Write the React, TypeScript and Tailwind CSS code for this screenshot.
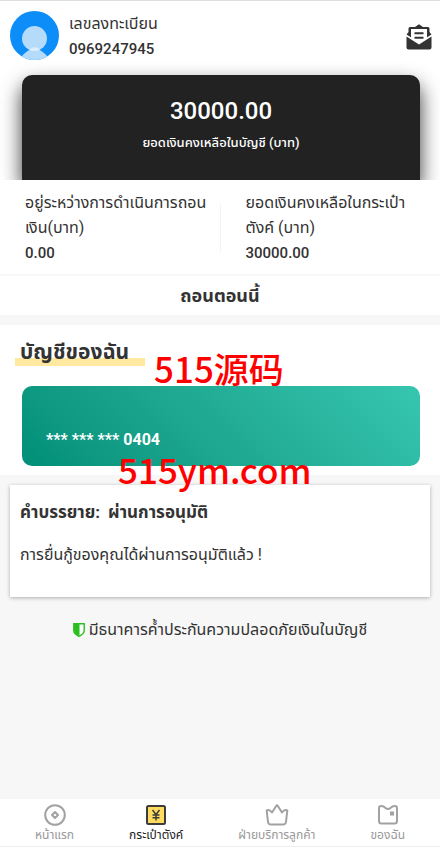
import type { ReactNode } from "react";

interface BalanceProps {
  label: string;
  value: string;
}

interface TabProps {
  label: string;
  icon: ReactNode;
  active?: boolean;
}

const AvatarIcon = () => (
  <svg viewBox="0 0 49 49" className="size-[49px] shrink-0" aria-hidden="true">
    <defs>
      <clipPath id="avatar-clip">
        <circle cx="24.5" cy="24.5" r="24.5" />
      </clipPath>
    </defs>
    <g clipPath="url(#avatar-clip)">
      <rect width="49" height="49" fill="#0d8df8" />
      <path d="M10 47 Q18 38 24.500 37 Q31 38 39 47 V49 H10 Z" fill="#b5dbfb" />
      <circle cx="24.5" cy="27.5" r="12.5" fill="#b5dbfb" />
      <path d="M19 38.500Q24.500 34 30 38.500Q24.500 41.500 19 38.500Z" fill="#dceefe" />
    </g>
  </svg>
);

const MailIcon = () => (
  <svg viewBox="0 0 26 26" className="size-[26px]" aria-hidden="true">
    <path d="M.5 10.500 L2.500 8 V4.500 Q2.500 3 4 3 H9 L13 .3 L17 3 H22 Q23.500 3 23.500 4.500 V8 L25.500 10.500 L20 14 H6 Z" fill="#333" />
    <path d="M5 5 H21 V14.500 L13 19 L5 14.500 Z" fill="#fff" />
    <path d="M8.500 9.300 H17.500 M8.500 13.700 H17.500" stroke="#333" strokeWidth="2" />
    <path d="M.5 12.500 L13 20.500 L25.500 12.500 V23.500 Q25.500 25.500 23.500 25.500 H2.500 Q.5 25.500 .5 23.500 Z" fill="#333" />
  </svg>
);

const ShieldIcon = () => (
  <svg viewBox="0 0 12 14" className="h-[14px] w-[12px] shrink-0" aria-hidden="true">
    <path d="M.8 .8 H11.200 V7.500 Q11.200 11 6 13.300 Q.8 11 .8 7.500 Z" fill="#fff" stroke="#2abf1e" strokeWidth="1.400" />
    <path d="M1 1 H6.500 V13 Q1 11 1 7.500 Z" fill="#2abf1e" />
  </svg>
);

const HomeIcon = () => (
  <svg viewBox="0 0 24 24" className="size-6" fill="none" stroke="#a2a2a2" strokeWidth="2" aria-hidden="true">
    <circle cx="12" cy="12" r="9.800" />
    <path d="M12 9 L15 12 L12 15 L9 12 Z" strokeLinejoin="round" />
  </svg>
);

const WalletIcon = () => (
  <svg viewBox="0 0 24 24" className="size-6" fill="none" aria-hidden="true">
    <rect x="3" y="3" width="18" height="18" rx="1.500" fill="#ffdc60" stroke="#3c3c3c" strokeWidth="2" />
    <path d="M8.500 7 L12 11.500 L15.500 7 M12 11.500 V17.500 M8.500 12 H15.500 M8.500 14.700 H15.500" stroke="#3c3c3c" strokeWidth="1.500" />
  </svg>
);

const ServiceIcon = () => (
  <svg viewBox="0 0 24 24" className="size-6" fill="none" stroke="#a2a2a2" strokeWidth="2" strokeLinecap="round" strokeLinejoin="round" aria-hidden="true">
    <path d="M1.700 7.500 Q4.500 6 7 9.500 L11.200 3 Q12 1.700 12.800 3 L17 9.500 Q19.500 6 22.300 7.500 L21 19 Q20.700 21.500 18 21.500 H6 Q3.300 21.500 3 19 Z" />
  </svg>
);

const MineIcon = () => (
  <svg viewBox="0 0 24 24" className="size-6" fill="none" stroke="#a2a2a2" strokeWidth="2" strokeLinejoin="round" aria-hidden="true">
    <path d="M3 5 Q3 3 5 3 Q8 3 9.500 5 Q12 7 14.500 5 Q16 3 19 3 Q21 3 21 5 V18 Q21 20.500 18.500 20.500 H5.500 Q3 20.500 3 18 Z" />
    <rect x="14" y="8.500" width="4" height="4" fill="#a2a2a2" stroke="none" />
  </svg>
);

const Balance = ({ label, value }: BalanceProps) => (
  <div className="flex-1 pr-[10px] pl-[25px]">
    <p>{label}</p>
    <p className="pt-px text-[15px] leading-[25px] font-medium">{value}</p>
  </div>
);

const Tab = ({ label, icon, active }: TabProps) => (
  <button type="button" className="flex flex-col items-center">
    {icon}
    <span className={`text-xs leading-4 whitespace-nowrap ${active ? "text-[#222]" : "text-[#999]"}`}>{label}</span>
  </button>
);

export default function App() {
  return (
    <div className="relative flex min-h-screen flex-col border-t border-[#dedede] bg-[#f7f7f7] font-[Roboto,'Noto_Sans_Thai','Noto_Sans',sans-serif] text-base leading-[25px] text-[#333]">
      <div className="overflow-hidden bg-white">
        <header className="flex items-start gap-[10px] px-[10px] pt-[10px]">
          <AvatarIcon />
          <div className="flex-1">
            <p>เลขลงทะเบียน</p>
            <p className="pt-px text-[15px] leading-[25px] font-medium">0969247945</p>
          </div>
          <button type="button" aria-label="ข้อความ" className="-mr-0.5 self-center">
            <MailIcon />
          </button>
        </header>
        <div className="mt-[13px] mr-5 ml-[22px] flex h-[105px] flex-col items-center rounded-t-[10px] bg-[#222] pt-5 text-white shadow-[0_10px_20px_rgba(0,0,0,0.8)]">
          <p className="text-2xl leading-8 font-medium">30000.00</p>
          <p className="mt-1 text-[13px] leading-6 font-medium">ยอดเงินคงเหลือในบัญชี (บาท)</p>
        </div>
      </div>

      <section className="flex items-center bg-white pt-[10px] pb-2">
        <Balance label="อยู่ระหว่างการดำเนินการถอนเงิน(บาท)" value="0.00" />
        <div className="h-12 w-px bg-[#f3f3f3]" />
        <Balance label="ยอดเงินคงเหลือในกระเป๋าตังค์ (บาท)" value="30000.00" />
      </section>
      <button type="button" className="h-[41px] border-t-2 border-[#f7f7f7] bg-white text-lg font-bold">
        ถอนตอนนี้
      </button>

      <section className="mt-[10px] bg-white px-[15px] pt-[13px] pb-[9px]">
        <h2 className="w-fit bg-linear-to-t from-[#ffe9a0] to-[#ffe9a0] bg-[length:100%_8px] bg-bottom bg-no-repeat pr-4 pl-[5px] text-[21px] leading-7 font-bold">
          บัญชีของฉัน
        </h2>
        <div className="mt-5 mr-[5px] ml-[7px] h-20 rounded-[10px] bg-linear-45 from-[#008f78] to-[#36c6b0] px-6 pt-[41px] font-bold text-white">
          *** *** *** 0404
        </div>
      </section>

      <section className="m-[10px] h-[112px] bg-white p-[10px] shadow-[0_1px_4px_rgba(0,0,0,0.3)]">
        <h3 className="mt-[5px] flex gap-2 text-[17px] leading-[25px] font-bold">
          <span>คำบรรยาย:</span>
          <span>ผ่านการอนุมัติ</span>
        </h3>
        <p className="mt-[17px]">การยื่นกู้ของคุณได้ผ่านการอนุมัติแล้ว !</p>
      </section>

      <p className="mt-[10px] flex items-center justify-center gap-1">
        <ShieldIcon />
        มีธนาคารค้ำประกันความปลอดภัยเงินในบัญชี
      </p>

      <nav className="mt-auto flex h-12 items-start justify-between border-b border-[#eee] bg-white px-[35px] pt-1">
        <Tab label="หน้าแรก" icon={<HomeIcon />} />
        <Tab label="กระเป๋าตังค์" icon={<WalletIcon />} active />
        <Tab label="ฝ่ายบริการลูกค้า" icon={<ServiceIcon />} />
        <Tab label="ของฉัน" icon={<MineIcon />} />
      </nav>

      <div className="pointer-events-none absolute inset-x-0 top-[349px] font-['Noto_Sans_CJK_SC',sans-serif] text-[35px] leading-9 font-medium text-[#f00]">
        <p className="pl-[154px]">515源码</p>
        <p className="mt-[65px] pl-[118px]">515ym.com</p>
      </div>
    </div>
  );
}
